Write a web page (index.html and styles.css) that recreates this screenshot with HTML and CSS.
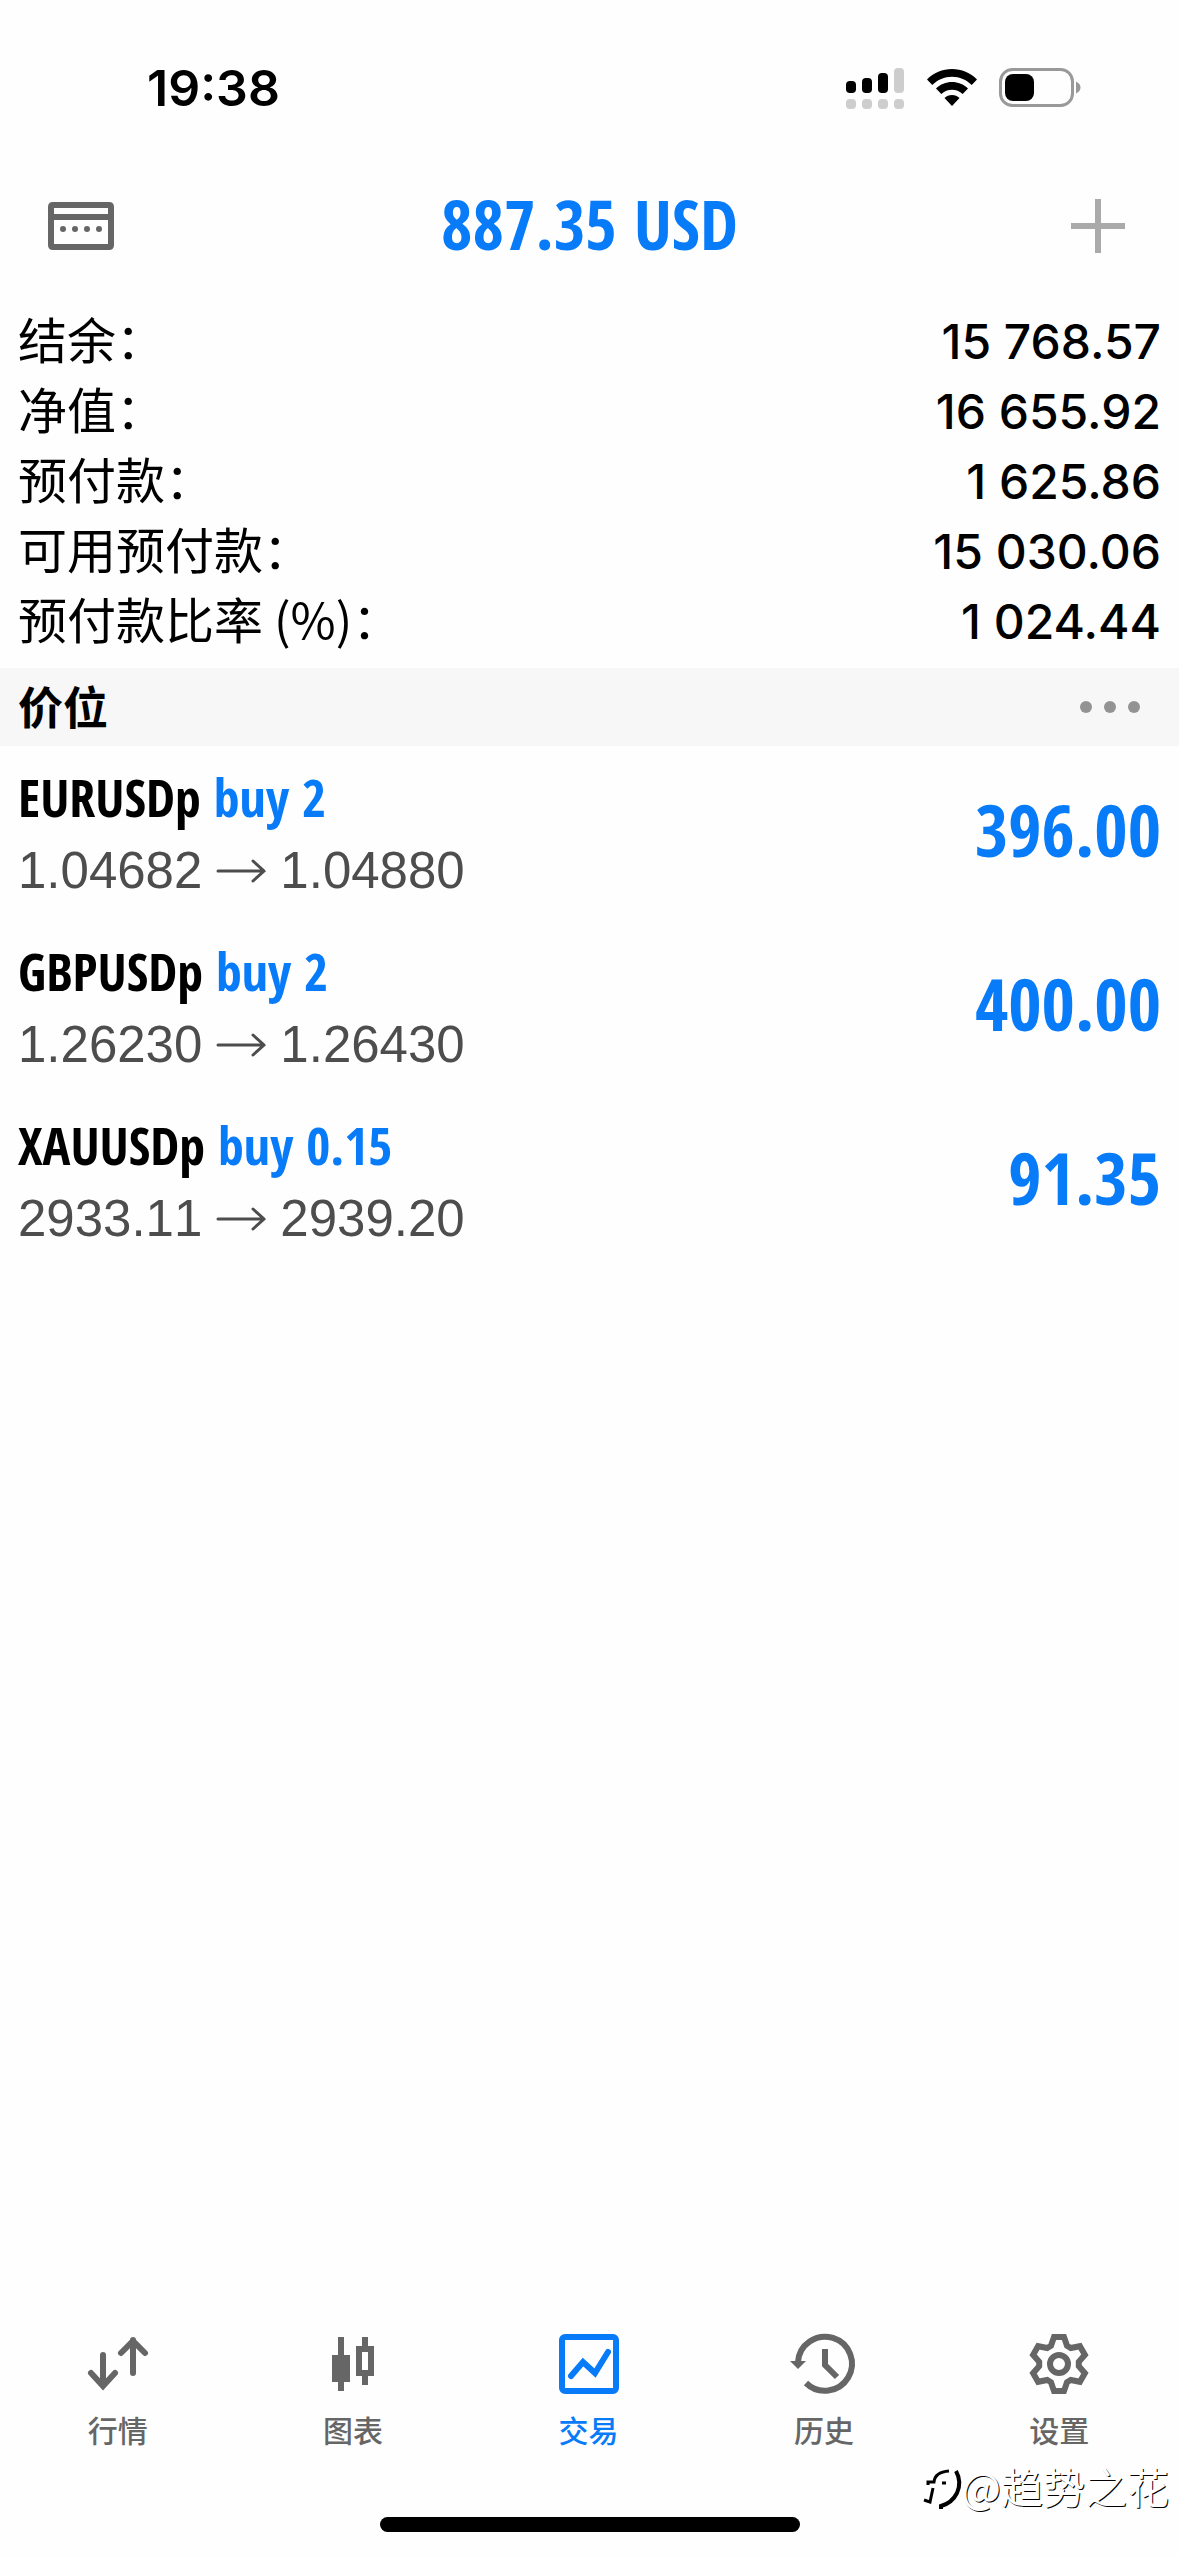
FILE: index.html
```html
<!DOCTYPE html>
<html lang="zh-CN">
<head>
<meta charset="utf-8">
<meta name="viewport" content="width=device-width, initial-scale=1">
<title>交易</title>
<link rel="stylesheet" href="styles.css">
</head>
<body>
<div class="screen">
  <div class="status-bar">
    <time class="clock">19:38</time>
    <div class="status-icons">
      <svg class="signal" viewBox="0 0 60 42" role="img" aria-label="信号">
        <g fill="#000"><rect x="1" y="14" width="10" height="12" rx="4"/><rect x="17" y="11" width="10" height="15" rx="4"/><rect x="33" y="6" width="10" height="20" rx="4"/></g>
        <g fill="#cdcdcd"><rect x="49" y="1" width="10" height="25" rx="4"/><rect x="1" y="32" width="10" height="10" rx="4"/><rect x="17" y="32" width="10" height="10" rx="4"/><rect x="33" y="32" width="10" height="10" rx="4"/><rect x="49" y="32" width="10" height="10" rx="4"/></g>
      </svg>
      <svg class="wifi" viewBox="0 0 50 38" role="img" aria-label="Wi-Fi">
        <path fill="#000" d="M25 0C34.500 0 43.500 3.700 50 10.500L44.700 16C39.500 10.700 32.500 7.700 25 7.700S10.500 10.700 5.300 16L0 10.500C6.500 3.700 15.500 0 25 0ZM25 13C31 13 36.700 15.300 41 19.500L35.700 25C32.800 22.200 29 20.700 25 20.700S17.200 22.200 14.300 25L9 19.500C13.300 15.300 19 13 25 13ZM25 26C27.900 26 30.500 27.100 32.500 29L25 37L17.500 29C19.500 27.100 22.100 26 25 26Z"/>
      </svg>
      <svg class="battery" viewBox="0 0 82 40" role="img" aria-label="电量">
        <rect x="1.500" y="1.500" width="72" height="36" rx="12" fill="none" stroke="#999" stroke-width="3"/>
        <rect x="6" y="6" width="29" height="27" rx="8" fill="#000"/>
        <path fill="#999" d="M77 13.500C83 16 83 23 77 25.500Z"/>
      </svg>
    </div>
  </div>

  <header class="top-bar">
    <button class="icon-button" type="button" aria-label="账户">
      <svg class="card-icon" viewBox="0 0 66 48"><path fill="#666" fill-rule="evenodd" d="M5 0H61Q66 0 66 5V43Q66 48 61 48H5Q0 48 0 43V5Q0 0 5 0ZM6 6V12H60V6ZM6 18V42H60V18Z"/><g fill="#666"><circle cx="15" cy="27" r="3"/><circle cx="27" cy="27" r="3"/><circle cx="39" cy="27" r="3"/><circle cx="51" cy="27" r="3"/></g></svg>
    </button>
    <h1 class="total">887.35 USD</h1>
    <button class="icon-button add-button" type="button" aria-label="新订单">
      <svg class="plus-icon" viewBox="0 0 66 54"><path d="M33 0V54M6 27H60" stroke="#aaa" stroke-width="6"/></svg>
    </button>
  </header>

  <main class="content">
    <dl class="account">
      <div class="account-row"><dt>结余：</dt><dd>15 768.57</dd></div>
      <div class="account-row"><dt>净值：</dt><dd>16 655.92</dd></div>
      <div class="account-row"><dt>预付款：</dt><dd>1 625.86</dd></div>
      <div class="account-row"><dt>可用预付款：</dt><dd>15 030.06</dd></div>
      <div class="account-row"><dt>预付款比率 (%)：</dt><dd>1 024.44</dd></div>
    </dl>

    <div class="section-head">
      <h2>价位</h2>
      <button class="icon-button" type="button" aria-label="更多">
        <svg class="more-icon" viewBox="0 0 60 12"><g fill="#939393"><circle cx="6" cy="6" r="6"/><circle cx="30" cy="6" r="6"/><circle cx="54" cy="6" r="6"/></g></svg>
      </button>
    </div>

    <ul class="positions">
      <li class="position">
        <div class="details">
          <p class="deal">EURUSDp <span class="side">buy 2</span></p>
          <p class="prices"><span>1.04682</span><svg class="arrow" viewBox="0 0 50 24"><path d="M2 12H48M37 2L48 12L37 22"/></svg><span>1.04880</span></p>
        </div>
        <strong class="profit">396.00</strong>
      </li>
      <li class="position">
        <div class="details">
          <p class="deal">GBPUSDp <span class="side">buy 2</span></p>
          <p class="prices"><span>1.26230</span><svg class="arrow" viewBox="0 0 50 24"><path d="M2 12H48M37 2L48 12L37 22"/></svg><span>1.26430</span></p>
        </div>
        <strong class="profit">400.00</strong>
      </li>
      <li class="position">
        <div class="details">
          <p class="deal">XAUUSDp <span class="side">buy 0.15</span></p>
          <p class="prices"><span>2933.11</span><svg class="arrow" viewBox="0 0 50 24"><path d="M2 12H48M37 2L48 12L37 22"/></svg><span>2939.20</span></p>
        </div>
        <strong class="profit">91.35</strong>
      </li>
    </ul>
  </main>

  <nav class="tab-bar">
    <a class="tab" href="#quotes">
      <svg viewBox="0 0 66 66"><path fill="none" stroke="currentColor" stroke-width="6" stroke-linecap="round" d="M18 24V54M6 42L18 55L30 42M48 42V9M36 22L48 10L60 22"/></svg>
      <span>行情</span>
    </a>
    <a class="tab" href="#charts">
      <svg viewBox="0 0 66 66"><path fill="currentColor" fill-rule="evenodd" d="M18 6H24V24H30V51H24V60H18V51H12V24H18ZM42 6H48V15H54V45H48V54H42V45H36V15H42ZM42 21V39H48V21Z"/></svg>
      <span>图表</span>
    </a>
    <a class="tab tab-active" href="#trade" aria-current="page">
      <svg viewBox="0 0 66 66"><g fill="none" stroke="currentColor" stroke-width="6"><rect x="6" y="6" width="54" height="54" rx="3"/><path stroke-linecap="round" d="M15 45L27 31L39 42L52 21"/></g></svg>
      <span>交易</span>
    </a>
    <a class="tab" href="#history">
      <svg viewBox="0 0 66 66"><path fill="none" stroke="currentColor" stroke-width="6" d="M7 31A27 27 0 1 1 15 52M34 18V34L46 46"/><path fill="currentColor" d="M-1 30H15L7 38Z"/></svg>
      <span>历史</span>
    </a>
    <a class="tab" href="#settings">
      <svg viewBox="0 0 66 66"><g fill="none" stroke="currentColor" stroke-width="6"><path d="M25 14.800L28 6H38L41 14.800L44.800 17L53.900 15.200L58.900 23.800L52.800 30.800V35.200L58.900 42.200L53.900 50.800L44.800 49L41 51.200L38 60H28L25 51.200L21.200 49L12.100 50.800L7.100 42.200L13.200 35.200V30.800L7.100 23.800L12.100 15.200L21.200 17Z"/><circle cx="33" cy="33" r="9"/></g></svg>
      <span>设置</span>
    </a>
  </nav>
  <div class="home-area"><span class="home-indicator"></span></div>
  <div class="watermark">
    <svg viewBox="0 0 38 46"><g fill="none" stroke="#000"><path stroke-width="3" d="M10 25L7 39L1 37M5 22V19H11Q12 9 26 8M19 20H23"/><path stroke-width="4" d="M33 8Q39 19 34 30Q29 40 18 43V46"/></g></svg>
    <span>@趋势之花</span>
  </div>
</div>
</body>
</html>
```
FILE: styles.css
```css
:root {
  --blue: #087bf8;
  --gray: #666;
  --cjk: "Noto Sans CJK SC", sans-serif;
  --condensed: "Avenir Next Condensed", "Open Sans Condensed", "Roboto Condensed", sans-serif;
}

* { box-sizing: border-box; }

body {
  margin: 0;
  background: #fefefe;
  color: #000;
  font-family: "Inter", var(--cjk);
}

h1, h2, p, dl, dd, ul { margin: 0; padding: 0; }

svg { display: block; flex: none; overflow: visible; }

.screen {
  position: relative;
  display: flex;
  flex-direction: column;
  min-height: 100vh;
}

.status-bar {
  display: flex;
  justify-content: space-between;
  align-items: center;
  height: 176px;
  padding: 0 98px 0 147px;
}

.clock { font-size: 50px; font-weight: 600; line-height: 60px; }

.status-icons { display: flex; align-items: center; gap: 22px; }
.signal { width: 60px; height: 42px; }
.wifi { width: 50px; height: 38px; }
.battery { width: 82px; height: 40px; }

.icon-button {
  display: flex;
  padding: 0;
  border: 0;
  background: none;
}

.top-bar {
  display: grid;
  grid-template-columns: 1fr auto 1fr;
  align-items: center;
  height: 100px;
  padding: 0 48px;
}

.add-button { justify-self: end; }
.card-icon { width: 66px; height: 48px; }
.plus-icon { width: 66px; height: 54px; }

.total {
  align-self: start;
  color: var(--blue);
  font: 700 68px/96px var(--condensed);
}

.content { flex: 1; }

.account { padding: 30px 18px 12px; }

.account-row {
  display: flex;
  justify-content: space-between;
  align-items: flex-start;
  height: 70px;
}

.account-row dt { font: 400 49px/64px var(--cjk); }
.account-row dd { font-size: 48px; font-weight: 500; line-height: 72px; }

.section-head {
  display: flex;
  justify-content: space-between;
  height: 78px;
  padding: 0 39px 0 18px;
  background: #f7f7f7;
}

.section-head h2 { font: 700 45px/76px var(--cjk); }
.section-head .icon-button { align-items: center; }
.more-icon { width: 60px; height: 12px; }

.positions { list-style: none; }

.position {
  display: flex;
  justify-content: space-between;
  align-items: flex-start;
  height: 174px;
  padding: 0 18px;
}

.details { padding-top: 15px; }

.deal { font: 700 52px/72px var(--condensed); }
.side { color: var(--blue); }

.prices {
  display: flex;
  align-items: center;
  gap: 14px;
  color: #4d4d4d;
  font: 400 51px/76px "Liberation Sans", sans-serif;
  font-kerning: none;
}

.arrow {
  width: 50px;
  height: 24px;
  fill: none;
  stroke: currentColor;
  stroke-width: 3;
  stroke-linecap: round;
}

.profit {
  color: var(--blue);
  font: 700 72px/166px var(--condensed);
}

.tab-bar { display: flex; padding-right: 2px; }

.tab {
  display: flex;
  flex: 1;
  flex-direction: column;
  align-items: center;
  gap: 10px;
  color: var(--gray);
  font: 500 30px/44px var(--cjk);
  text-decoration: none;
}

.tab svg { width: 66px; height: 66px; }
.tab-active { color: var(--blue); }

.home-area {
  display: flex;
  justify-content: center;
  align-items: flex-end;
  height: 105px;
  padding-bottom: 24px;
}

.home-indicator {
  width: 420px;
  height: 15px;
  border-radius: 8px;
  background: #000;
}

.watermark {
  position: absolute;
  right: 10px;
  bottom: 40px;
  display: flex;
  align-items: center;
  color: #fff;
  font: 400 42px/60px var(--cjk);
  text-shadow: 1px 1px 0 #000;
}

.watermark svg { width: 38px; height: 46px; }
```
